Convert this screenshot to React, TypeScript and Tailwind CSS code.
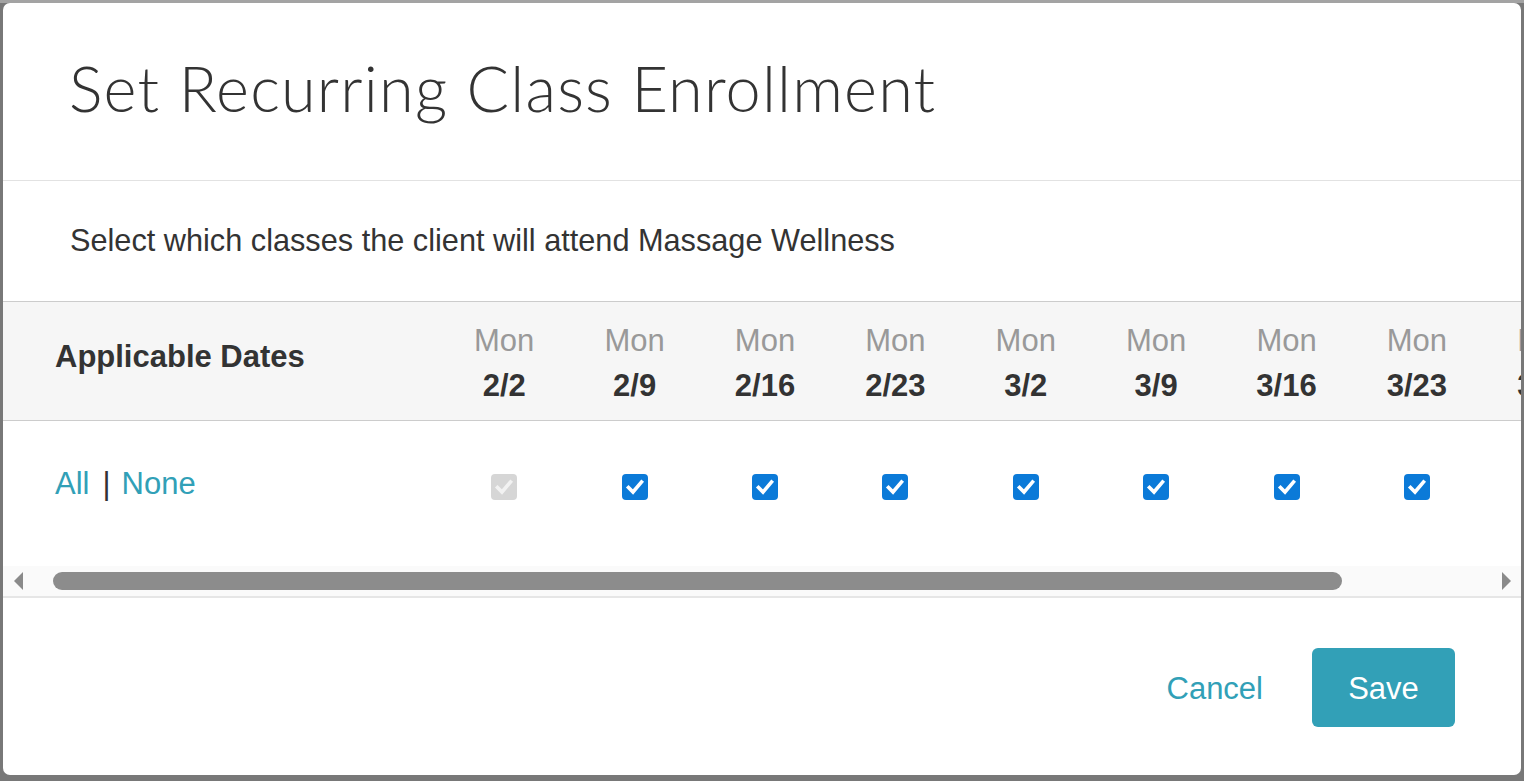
import * as React from "react";

const dates = ["2/2", "2/9", "2/16", "2/23", "3/2", "3/9", "3/16", "3/23", "3/30"];

function Check({ disabled }: { disabled?: boolean }) {
  return (
    <span
      className={
        disabled
          ? "inline-flex h-[26px] w-[26px] items-center justify-center rounded-[4px] bg-[#d6d6d6]"
          : "inline-flex h-[26px] w-[26px] items-center justify-center rounded-[4px] bg-[#0b7ad8]"
      }
    >
      <svg viewBox="0 0 26 26" className="h-[26px] w-[26px]">
        <path
          d="M6.5 13.5 L11 18 L19.5 8"
          fill="none"
          stroke={disabled ? "#f2f2f2" : "#ffffff"}
          strokeWidth="3.6"
          strokeLinecap="square"
        />
      </svg>
    </span>
  );
}

export default function App() {
  return (
    <div className="h-[781px] overflow-hidden border-t-[3px] border-[#a3a3a3] bg-[#787878] font-['Liberation_Sans',Arial,sans-serif]">
      <div className="ml-[3px] flex h-[772px] w-[1518px] flex-col overflow-hidden rounded-[7px] bg-white">
        {/* header */}
        <div className="flex h-[178px] shrink-0 items-center border-b border-[#e2e2e2] pl-[66px]">
          <h1 className="pb-[6px] font-['Lato',sans-serif] text-[63px] font-light tracking-[1.2px] text-[#333]">
            Set Recurring Class Enrollment
          </h1>
        </div>

        <div className="flex h-[120px] shrink-0 items-center pl-[67px] text-[30.7px] text-[#333]">
          Select which classes the client will attend Massage Wellness
        </div>

        {/* table */}
        <div className="shrink-0 overflow-hidden border-t border-[#cccccc]">
          <div className="flex h-[119px] border-b border-[#cccccc] bg-[#f6f6f6]">
            <div className="flex w-[436px] shrink-0 items-center pb-[8px] pl-[52px] text-[31px] font-bold text-[#333]">
              Applicable Dates
            </div>
            {dates.map((d) => (
              <div
                key={d}
                className="flex w-[130.4px] shrink-0 flex-col items-center justify-center pt-[4px] text-[31px] leading-[45px]"
              >
                <span className="text-[#999]">Mon</span>
                <span className="font-bold text-[#333]">{d}</span>
              </div>
            ))}
          </div>

          <div className="flex h-[145px]">
            <div className="flex w-[436px] shrink-0 items-start pl-[52px] pt-[40px] text-[31px] text-[#31a0b7]">
              <span>All</span>
              <span className="ml-[13px] mr-[11px] text-[#333]">|</span>
              <span>None</span>
            </div>
            {dates.map((d, i) => (
              <div
                key={d}
                className="flex w-[130.4px] shrink-0 justify-center pt-[53px]"
              >
                <Check disabled={i === 0} />
              </div>
            ))}
          </div>

          {/* scrollbar */}
          <div className="flex h-[32px] items-center border-b-2 border-[#e6e6e6] bg-[#fafafa]">
            <svg viewBox="0 0 10 18" className="ml-[11px] h-[18px] w-[10px]">
              <path d="M9 0 L0 9 L9 18 Z" fill="#8a8a8a" />
            </svg>
            <div className="ml-[29px] h-[18px] w-[1289px] rounded-full bg-[#8c8c8c]" />
            <svg viewBox="0 0 10 18" className="ml-auto mr-[10px] h-[18px] w-[10px]">
              <path d="M1 0 L10 9 L1 18 Z" fill="#8a8a8a" />
            </svg>
          </div>
        </div>

        {/* footer */}
        <div className="flex flex-1 items-center justify-end pr-[66px] pt-[2px]">
          <button className="mr-[49px] pt-[4px] text-[31px] text-[#31a0b7]">Cancel</button>
          <button className="flex h-[79px] w-[143px] items-center justify-center rounded-[6px] bg-[#32a0b7] pt-[3px] text-[31px] text-white">
            Save
          </button>
        </div>
      </div>
    </div>
  );
}
